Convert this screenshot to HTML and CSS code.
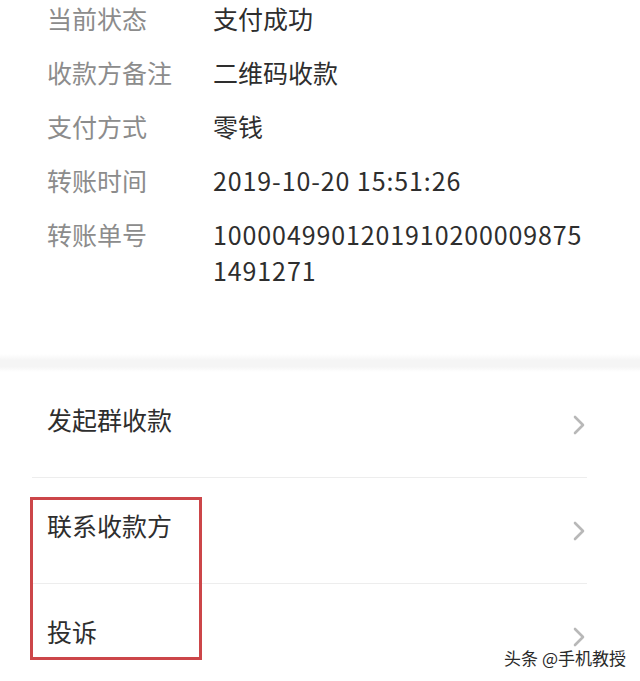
FILE: index.html
```html
<!DOCTYPE html>
<html lang="zh-CN">
<head>
    <meta charset="UTF-8">
    <meta name="viewport" content="width=device-width, initial-scale=1.0">
    <title>转账详情</title>
    <link rel="stylesheet" href="styles.css">
</head>
<body>
    <div class="page">
        <!-- transfer details -->
        <div class="detail">
            <div class="row">
                <span class="label">当前状态</span>
                <span class="value">支付成功</span>
            </div>
            <div class="row">
                <span class="label">收款方备注</span>
                <span class="value">二维码收款</span>
            </div>
            <div class="row">
                <span class="label">支付方式</span>
                <span class="value">零钱</span>
            </div>
            <div class="row">
                <span class="label">转账时间</span>
                <span class="value num">2019-10-20 15:51:26</span>
            </div>
            <div class="row">
                <span class="label">转账单号</span>
                <span class="value num">10000499012019102000098751491271</span>
            </div>
        </div>

        <div class="gap"></div>

        <!-- actions -->
        <ul class="menu">
            <li class="menu-item">
                <span>发起群收款</span>
                <svg class="arrow" width="12" height="20" viewBox="0 0 12 20"><polyline points="2,2 10,10 2,18" /></svg>
            </li>
            <li class="menu-item">
                <span>联系收款方</span>
                <svg class="arrow" width="12" height="20" viewBox="0 0 12 20"><polyline points="2,2 10,10 2,18" /></svg>
            </li>
            <li class="menu-item">
                <span>投诉</span>
                <svg class="arrow" width="12" height="20" viewBox="0 0 12 20"><polyline points="2,2 10,10 2,18" /></svg>
            </li>
        </ul>

        <!-- highlight frame and watermark -->
        <div class="mark-box"></div>
        <div class="watermark">头条 @手机教授</div>
    </div>
</body>
</html>
```

FILE: styles.css
```css
html, body {
    margin: 0;
    padding: 0;
    background-color: #ffffff;
}
body {
    font-family: "Noto Sans CJK SC", "Noto Sans", sans-serif;
    font-size: 25px;
    color: #2e2e2e;
}
.page {
    position: relative;
    height: 681px;
    overflow: hidden;
}
.detail {
    display: flex;
    flex-direction: column;
    gap: 18px;
    padding: 0 50px 66px 47px;
}
.row {
    display: flex;
    line-height: 36px;
}
.label {
    flex: 0 0 166px;
    color: #8c8c8c;
}
.value {
    flex: 1;
    min-width: 0;
    word-break: break-all;
}
.num {
    letter-spacing: 0.9px;
}
.gap {
    height: 18px;
    background: linear-gradient(#ffffff 0%, #f5f5f5 35%, #f5f5f5 70%, #ffffff 100%);
}
.menu {
    list-style: none;
    margin: 0;
    padding: 0;
}
.menu-item {
    display: flex;
    align-items: center;
    justify-content: space-between;
    height: 105px;
    line-height: 36px;
    padding: 0 2px 0 15px;
    margin: 0 53px 0 32px;
    border-bottom: 1px solid #ededed;
    box-sizing: content-box;
}
.menu-item span {
    padding-bottom: 12px;
}
.arrow {
    fill: none;
    stroke: #b8b8b8;
    stroke-width: 2.6;
    stroke-linecap: round;
    stroke-linejoin: round;
}
.mark-box {
    position: absolute;
    left: 30px;
    top: 497px;
    width: 172px;
    height: 163px;
    border: 3px solid #cc4649;
    box-sizing: border-box;
}
.watermark {
    position: absolute;
    right: 14px;
    top: 648px;
    font-size: 17px;
    line-height: 20px;
    color: #2a2a2a;
    text-shadow: 0 0 2px #ffffff, 0 0 2px #ffffff, 0 0 3px #ffffff;
}
```
